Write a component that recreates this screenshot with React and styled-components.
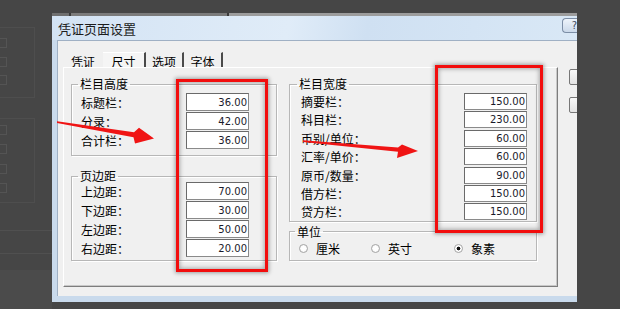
import styled, { createGlobalStyle } from "styled-components";

const GlobalStyle = createGlobalStyle`
  html, body { margin: 0; padding: 0; background: #464646; }
  body { font-family: "Noto Sans CJK SC", "Noto Sans", sans-serif; }
  * { box-sizing: border-box; }
`;

const Screen = styled.div`
  position: relative;
  width: 620px;
  height: 309px;
  overflow: hidden;
  background: #464646;
  display: flex;
  align-items: flex-start;
`;

const Backdrop = styled.div`
  width: 52px;
  height: 309px;
  flex-shrink: 0;
  display: flex;
  flex-direction: column;
  padding-top: 27px;
`;

const FaintGroup = styled.div`
  width: 35px;
  height: ${(p) => p.$h}px;
  margin-top: ${(p) => p.$mt || 0}px;
  border: 1px solid #4e4e4e;
  border-left: none;
  display: flex;
  flex-direction: column;
  gap: ${(p) => p.$gap}px;
  padding-top: ${(p) => p.$pt}px;
`;

const FaintField = styled.div`
  width: 7px;
  height: 10px;
  border: 1px solid #545454;
  border-left: none;
`;

const FaintRule = styled.div`
  height: 1px;
  margin-top: ${(p) => p.$mt}px;
  background: #505050;
`;

const FaintFloor = styled.div`
  flex: 1;
  margin-top: 16px;
  background: #4b4b4b;
`;

const Window = styled.div`
  width: 525px;
  height: 289px;
  margin-top: 13px;
  flex-shrink: 0;
  display: flex;
  flex-direction: column;
  overflow: hidden;
  background: #c9daec;
`;

const TopStrip = styled.div`
  height: 3px;
  background: linear-gradient(
    to right,
    #6f6f6f 0 17px,
    #3c3c3c 17px 19px,
    #7b7b7b 19px 175px,
    #3c3c3c 175px 177px,
    #9c9c9c 177px
  );
`;

const TitleBar = styled.div`
  height: 24px;
  display: flex;
  align-items: center;
  padding-left: 6px;
  background: linear-gradient(100deg, #d3e3f4 0%, #e0ecf8 45%, #cfe0f2 60%, #d9e8f6 100%);
  font-size: 13px;
  color: #1c1c1c;
`;

const HelpButton = styled.div`
  margin-left: auto;
  align-self: flex-start;
  margin-top: 2px;
  width: 15px;
  height: 15px;
  border: 1px solid #7c8ea6;
  border-right: none;
  border-radius: 4px 0 0 4px;
  background: linear-gradient(#eef4fb, #cbd9ea);
  font-family: "DejaVu Sans", sans-serif;
  font-size: 10px;
  line-height: 13px;
  color: #3a4a60;
  text-align: right;
  overflow: hidden;
`;

const Frame = styled.div`
  flex: 1;
  display: flex;
  padding: 0 0 6px 5px;
`;

const Client = styled.div`
  flex: 1;
  background: #f0f0f0;
  border-top: 1px solid #9fb0c4;
  border-left: 1px solid #9fb0c4;
  padding: 11px 0 0 5px;
`;

const TabRow = styled.div`
  height: 15px;
  display: flex;
`;

const Tab = styled.div`
  width: ${(p) => p.$w}px;
  display: flex;
  align-items: center;
  justify-content: center;
  padding-top: 3px;
  font-size: 12px;
  line-height: 1;
  color: #000;
  background: ${(p) => (p.$active ? "#f5f5f5" : "transparent")};
  border-top: 1px solid ${(p) => (p.$active ? "#ffffff" : "transparent")};
  border-right: ${(p) => (p.$sep ? "2px solid #4a4a4a" : "none")};
`;

const MainRow = styled.div`
  display: flex;
  align-items: flex-start;
  gap: 11px;
`;

const Panel = styled.div`
  width: 495px;
  height: 220px;
  border: 1px solid;
  border-color: #ffffff #7d7d7d #7d7d7d #ffffff;
  box-shadow: inset -1px -1px 0 #c8c8c8;
  padding: 10px 0 0 7px;
  display: grid;
  grid-template-columns: 206px 248px;
  column-gap: 12px;
  align-items: start;
`;

const Column = styled.div`
  display: flex;
  flex-direction: column;
  gap: ${(p) => p.$gap}px;
`;

const Group = styled.fieldset`
  margin: 0;
  min-width: 0;
  border: 1px solid #b7b7b7;
  box-shadow: 1px 1px 0 #ffffff, inset 1px 1px 0 #ffffff;
  padding: ${(p) => p.$pad};
  display: flex;
  flex-direction: column;
  gap: ${(p) => p.$gap || 0}px;
`;

const Legend = styled.legend`
  font-size: 12px;
  line-height: 12px;
  padding: 0 2px;
  margin-left: ${(p) => p.$ml}px;
  color: #000;
`;

const Row = styled.div`
  height: ${(p) => p.$h}px;
  display: flex;
  align-items: center;
`;

const Label = styled.span`
  flex: 1;
  font-size: 12px;
  color: #000;
  white-space: nowrap;
`;

const NumBox = styled.div`
  width: 63px;
  height: 100%;
  background: #fff;
  border: 1px solid #8a8a8a;
  border-top-color: #6a6a6a;
  border-left-color: #6a6a6a;
  font-family: "DejaVu Sans", "Liberation Sans", sans-serif;
  font-size: 10px;
  color: #1a1a2a;
  display: flex;
  align-items: center;
  justify-content: flex-end;
  padding-right: 1px;
`;

const RadioRow = styled.div`
  height: 16px;
  display: grid;
  grid-template-columns: 72px 83px auto;
  padding-left: 9px;
`;

const RadioItem = styled.label`
  display: flex;
  align-items: center;
  gap: 8px;
  font-size: 12px;
  color: #000;
`;

const RadioDot = styled.span`
  width: 9px;
  height: 9px;
  border-radius: 50%;
  border: 1px solid #a4a4a4;
  background: ${(p) =>
    p.$checked
      ? "radial-gradient(circle, #111 0 1.6px, #fff 2.2px)"
      : "radial-gradient(circle, #fff 0 2px, #f2f2f2 4px)"};
`;

const SideButtons = styled.div`
  display: flex;
  flex-direction: column;
  gap: 12px;
  padding-top: 2px;
`;

const SideButton = styled.div`
  width: 20px;
  height: 16px;
  border: 1px solid #777;
  border-radius: 2px;
  background: linear-gradient(#f8f8f8, #e2e2e2);
`;

const Callout = styled.div`
  position: absolute;
  left: ${(p) => p.$x}px;
  top: ${(p) => p.$y}px;
  width: ${(p) => p.$w}px;
  height: ${(p) => p.$h}px;
  border: 3px solid #f20d0d;
  box-shadow: 0 0 4px 1px rgba(0, 0, 0, 0.35), inset 0 0 4px 1px rgba(0, 0, 0, 0.3);
  pointer-events: none;
`;

const Arrows = styled.svg`
  position: absolute;
  left: 0;
  top: 0;
  pointer-events: none;
`;

const heights = [
  ["标题栏：", "36.00"],
  ["分录：", "42.00"],
  ["合计栏：", "36.00"],
];

const margins = [
  ["上边距：", "70.00"],
  ["下边距：", "30.00"],
  ["左边距：", "50.00"],
  ["右边距：", "20.00"],
];

const widths = [
  ["摘要栏：", "150.00"],
  ["科目栏：", "230.00"],
  ["币别/单位：", "60.00"],
  ["汇率/单价：", "60.00"],
  ["原币/数量：", "90.00"],
  ["借方栏：", "150.00"],
  ["贷方栏：", "150.00"],
];

const units = [
  ["厘米", false],
  ["英寸", false],
  ["象素", true],
];

function Field({ label, value, h }) {
  return (
    <Row $h={h}>
      <Label>{label}</Label>
      <NumBox>{value}</NumBox>
    </Row>
  );
}

export default function App() {
  return (
    <Screen>
      <GlobalStyle />
      <Backdrop>
        <FaintGroup $h={71} $pt={10} $gap={8.5}>
          <FaintField />
          <FaintField />
          <FaintField />
        </FaintGroup>
        <FaintGroup $h={85} $mt={20} $pt={6} $gap={9.3}>
          <FaintField />
          <FaintField />
          <FaintField />
          <FaintField />
        </FaintGroup>
        <FaintRule $mt={27} />
        <FaintRule $mt={22} />
        <FaintFloor />
      </Backdrop>

      <Window>
        <TopStrip />
        <TitleBar>
          凭证页面设置
          <HelpButton>?</HelpButton>
        </TitleBar>
        <Frame>
          <Client>
            <TabRow>
              <Tab $w={40}>凭证</Tab>
              <Tab $w={43} $active $sep>
                尺寸
              </Tab>
              <Tab $w={38} $sep>
                选项
              </Tab>
              <Tab $w={39} $sep>
                字体
              </Tab>
            </TabRow>
            <MainRow>
              <Panel>
                <Column $gap={14}>
                  <Group $pad="3px 27px 6px 9px" $gap={1}>
                    <Legend $ml={-3}>栏目高度</Legend>
                    {heights.map(([l, v]) => (
                      <Field key={l} label={l} value={v} h={18} />
                    ))}
                  </Group>
                  <Group $pad="0 27px 3px 9px" $gap={1}>
                    <Legend $ml={-3}>页边距</Legend>
                    {margins.map(([l, v]) => (
                      <Field key={l} label={l} value={v} h={18} />
                    ))}
                  </Group>
                </Column>
                <Column $gap={3.6}>
                  <Group $pad="3px 9px 1px 11px" $gap={1.4}>
                    <Legend $ml={-4}>栏目宽度</Legend>
                    {widths.map(([l, v]) => (
                      <Field key={l} label={l} value={v} h={17} />
                    ))}
                  </Group>
                  <Group $pad="2px 0 4px 0">
                    <Legend $ml={5}>单位</Legend>
                    <RadioRow>
                      {units.map(([u, c]) => (
                        <RadioItem key={u}>
                          <RadioDot $checked={c} />
                          {u}
                        </RadioItem>
                      ))}
                    </RadioRow>
                  </Group>
                </Column>
              </Panel>
              <SideButtons>
                <SideButton />
                <SideButton />
              </SideButtons>
            </MainRow>
          </Client>
        </Frame>
      </Window>

      <Callout $x={176} $y={79} $w={92} $h={193} />
      <Callout $x={435} $y={65} $w={108} $h={168} />

      <Arrows width="620" height="309" viewBox="0 0 620 309">
        <polygon
          points="57,121.2 134,132.2 139,127.8 154,138.4 135,143.6 133.5,137.2 57,123"
          fill="#f01414"
        />
        <polygon
          points="303,140.2 398,147.4 402,144.4 418,151 397,158 398,151.8 303,142"
          fill="#f01414"
        />
      </Arrows>
    </Screen>
  );
}
